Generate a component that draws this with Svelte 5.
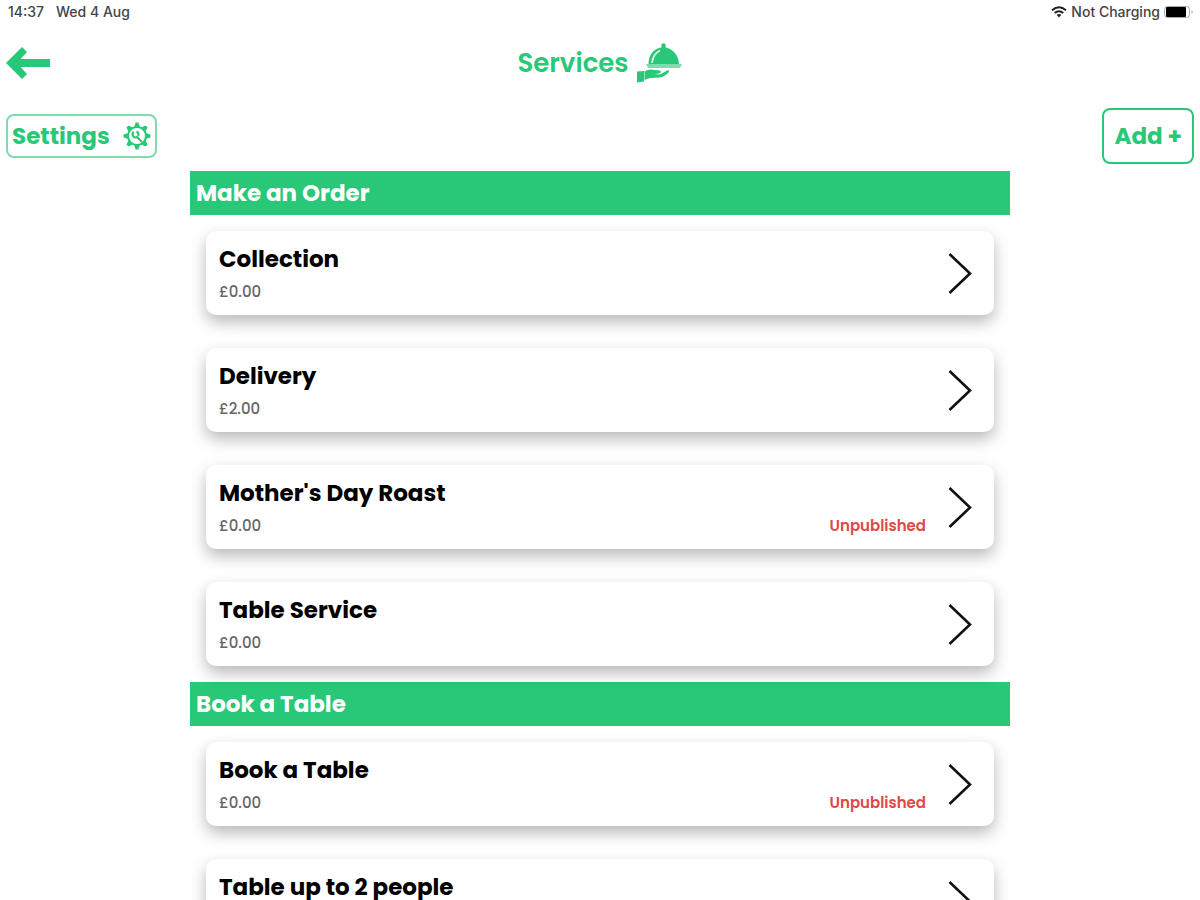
<!-- App.svelte -->

<script lang="ts">
  type Service = { name: string; price: string; published: boolean };
  type Section = { title: string; services: Service[] };

  const sections: Section[] = [
    {
      title: "Make an Order",
      services: [
        { name: "Collection", price: "£0.00", published: true },
        { name: "Delivery", price: "£2.00", published: true },
        { name: "Mother's Day Roast", price: "£0.00", published: false },
        { name: "Table Service", price: "£0.00", published: true },
      ],
    },
    {
      title: "Book a Table",
      services: [
        { name: "Book a Table", price: "£0.00", published: false },
        { name: "Table up to 2 people", price: "£0.00", published: true },
      ],
    },
  ];

  // eight teeth around the settings cog
  const teeth = [0, 45, 90, 135, 180, 225, 270, 315];
</script>

<div class="app">
  <div class="status">
    <div class="group when">
      <span>14:37</span>
      <span>Wed 4 Aug</span>
    </div>
    <div class="group">
      <svg width="16" height="12" viewBox="0 0 16 12" aria-hidden="true">
        <path d="M1 4.2Q8-1.6 15 4.2" fill="none" stroke="#222" stroke-width="2" />
        <path d="M3.7 7Q8 3.4 12.3 7" fill="none" stroke="#222" stroke-width="2" />
        <path d="M5.6 8.8Q8 7 10.4 8.8L8 11.4z" fill="#222" />
      </svg>
      <span>Not Charging</span>
      <svg width="30" height="12" viewBox="0 0 30 12" aria-hidden="true">
        <rect x="0.5" y="0.5" width="25" height="11" rx="3" fill="none" stroke="#aaa" />
        <rect x="2" y="1" width="20" height="10" rx="1" fill="#000" />
        <path d="M27.5 4Q30 6 27.5 8z" fill="#aaa" />
      </svg>
    </div>
  </div>

  <header>
    <button class="back" aria-label="Back">
      <svg width="44" height="34" viewBox="0 0 44 34" aria-hidden="true">
        <path d="M0 17L16 1L21 6L14.5 13H44V21H14.5L21 28L16 33z" fill="#28c878" />
      </svg>
    </button>
    <h1>Services</h1>
    <svg width="46" height="40" viewBox="0 0 46 40" aria-hidden="true">
      <circle cx="26.5" cy="2.5" r="2.2" fill="#28c878" />
      <path d="M11.5 21Q12 7 24 4.5L26.5 2L29 4.500Q41 8 42 21z" fill="#28c878" />
      <path d="M15 20Q16 11 23 7.5" fill="none" stroke="#d8f5e6" stroke-width="1.8" />
      <path d="M9 21H45L43 25H11z" fill="#7fdcae" />
      <path d="M0 28.500L7 28V38.500L0 39.500z" fill="#28c878" />
      <path d="M7.500 28.500Q12 25.500 17 27L23 27.500Q25 29.500 22 30.500L17 31L23 31.500L30 27.500Q33.500 26.500 31.500 29.500Q27 34 22.500 34.500L13 35L7.500 37z" fill="#28c878" />
    </svg>
  </header>

  <div class="toolbar">
    <button class="settings">
      Settings
      <svg width="28" height="28" viewBox="0 0 28 28" aria-hidden="true">
        {#each teeth as angle}
          <path d="M11 5.500L12.500 0.500H15.500L17 5.500z" fill="#28c878" transform="rotate({angle} 14 14)" />
        {/each}
        <circle cx="14" cy="14" r="9" fill="none" stroke="#28c878" stroke-width="2" />
        <path d="M10.500 9.500Q8.500 12.500 10.500 14.500Q12 16 14 15L19 20M13.500 9.500Q16.500 11 15 14" fill="none" stroke="#28c878" stroke-width="2" />
      </svg>
    </button>
    <button class="add">Add +</button>
  </div>

  <main>
    {#each sections as section}
      <section>
        <h2>{section.title}</h2>
        <div class="cards">
          {#each section.services as service}
            <button class="card">
              <span class="info">
                <span class="name">{service.name}</span>
                <span class="price">{service.price}</span>
              </span>
              {#if !service.published}
                <span class="unpublished">Unpublished</span>
              {/if}
              <svg width="24" height="42" viewBox="0 0 24 42" aria-hidden="true">
                <path d="M1.500 1L22 20.500L1.500 40" fill="none" stroke="#111" stroke-width="2.6" />
              </svg>
            </button>
          {/each}
        </div>
      </section>
    {/each}
  </main>
</div>

<style>
  :global(body) { margin: 0; background: #fff; }

  .app {
    height: 100vh;
    display: flex;
    flex-direction: column;
    font-family: Poppins, Inter, "Liberation Sans", sans-serif;
    color: #000;
  }

  button { font: inherit; color: inherit; background: none; border: 0; padding: 0; cursor: pointer; }
  svg { display: block; flex-shrink: 0; }

  .status {
    display: flex;
    justify-content: space-between;
    padding: 4px 6px 4px 8px;
    font-family: Inter, "Liberation Sans", sans-serif;
    font-size: 14px;
    line-height: 16px;
    font-weight: 500;
    color: #444;
  }
  .group { display: flex; align-items: center; gap: 4px; }
  .when { gap: 12px; }

  header {
    display: grid;
    grid-template-columns: 1fr auto auto 1fr;
    align-items: center;
    column-gap: 8px;
    height: 78px;
    padding: 0 6px;
  }
  .back { justify-self: start; }
  h1 { margin: 0; font-size: 26px; line-height: 32px; font-weight: 600; color: #28c878; }

  .toolbar {
    display: flex;
    justify-content: space-between;
    align-items: center;
    padding: 6px 6px 7px;
    font-size: 23px;
    line-height: 32px;
    font-weight: 700;
    color: #28c878;
  }
  .settings, .add { border: 2px solid #28c878; border-radius: 8px; }
  .settings { display: flex; align-items: center; gap: 13px; height: 44px; padding: 0 4px; border-color: #7fdcae; }
  .add { height: 56px; padding: 0 10px; }

  main { flex: 1; min-height: 0; overflow-y: auto; scrollbar-width: none; }
  section { max-width: 820px; margin: 0 auto; }
  h2 {
    margin: 0;
    padding: 6px;
    font-size: 23px;
    line-height: 32px;
    font-weight: 700;
    color: #fff;
    background: #28c878;
  }

  .cards { display: flex; flex-direction: column; gap: 33px; padding: 16px; }
  .card {
    display: flex;
    align-items: center;
    gap: 22px;
    padding: 12px 22px 11px 13px;
    border-radius: 10px;
    background: #fff;
    box-shadow: 0 7px 16px rgba(0, 0, 0, 0.28);
    text-align: left;
  }
  .info { flex: 1; display: flex; flex-direction: column; gap: 5px; }
  .name { font-size: 23px; line-height: 32px; font-weight: 700; }
  .price { font-size: 15px; line-height: 24px; font-weight: 500; color: #666; }
  .unpublished { align-self: flex-end; font-size: 15px; line-height: 24px; font-weight: 600; color: #e04848; }
</style>
